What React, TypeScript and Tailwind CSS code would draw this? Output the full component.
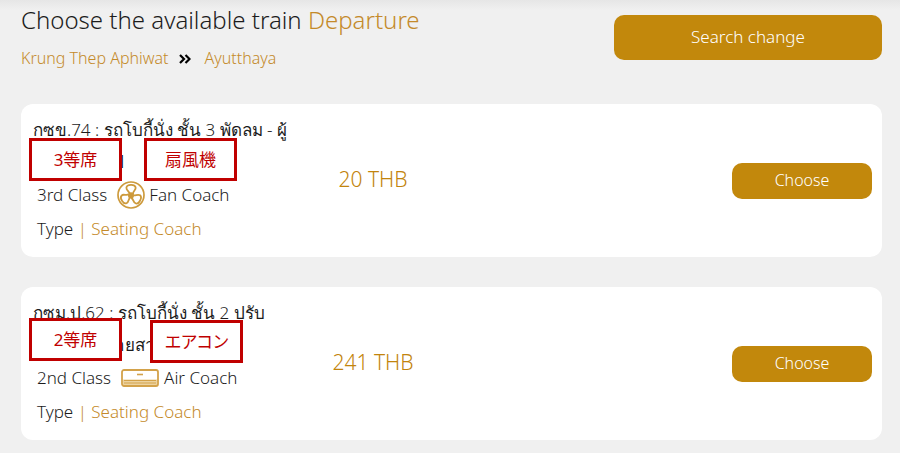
import { ReactNode } from "react";

interface Train {
  name: string;
  detail: string;
  seat: string;
  coach: string;
  icon: ReactNode;
  price: string;
  labels: { text: string; place: string }[];
}

function FanIcon() {
  return (
    <svg viewBox="0 0 28 28" className="ml-2.5 mr-1 h-7 w-7" fill="none" stroke="#cd9a3c" strokeWidth="1.7" strokeLinejoin="round" aria-hidden="true">
      <circle cx="14" cy="14" r="13" />
      <circle cx="14" cy="14.4" r="2.2" fill="#cd9a3c" />
      {["rotate(0 14 14.4)", "rotate(120 14 14.4)", "rotate(240 14 14.4)"].map((turn) => (
        <path key={turn} transform={turn} strokeWidth="1.8" d="M12.6 12.6 C12.6 10.6 9 9.2 9.4 6.6 C10 3.2 17.6 3 18.6 6.2 C19.4 9 15.8 9.8 16 13" />
      ))}
    </svg>
  );
}

function AirIcon() {
  return (
    <svg viewBox="0 0 38 18" className="ml-2.5 mr-[5px] h-[18px] w-[38px]" fill="none" stroke="#d3a24a" aria-hidden="true">
      <path d="M1.5 10.5h35v4a2 2 0 0 1-2 2h-31a2 2 0 0 1-2-2z" fill="#ecd3a0" stroke="none" />
      <rect x="1" y="1" width="36" height="16" rx="2" strokeWidth="1.8" />
      <path d="M3 11.5h32M3 14h32" strokeWidth="1" />
      <path d="M16 5.5h6" strokeWidth="1.6" />
    </svg>
  );
}

const trains: Train[] = [
  {
    name: "กซข.74 : รถโบกี้นั่ง ชั้น 3 พัดลม - ผู้",
    detail: "โดยสารทั่วป",
    seat: "3rd Class",
    coach: "Fan Coach",
    icon: <FanIcon />,
    price: "20 THB",
    labels: [
      { text: "3等席", place: "left-2 top-[34px]" },
      { text: "扇風機", place: "left-[123px] top-[34px]" },
    ],
  },
  {
    name: "กซม.ป.62 : รถโบกี้นั่ง ชั้น 2 ปรับ",
    detail: "อากาศ + ชายสาม",
    seat: "2nd Class",
    coach: "Air Coach",
    icon: <AirIcon />,
    price: "241 THB",
    labels: [
      { text: "2等席", place: "left-2 top-[31px]" },
      { text: "エアコン", place: "left-[129px] top-[33px]" },
    ],
  },
];

function TrainCard({ train }: { train: Train }) {
  return (
    <article className="relative flex items-center rounded-xl bg-white pr-[10px]">
      <div className="w-[280px] shrink-0 pb-[11px] pl-3 pt-[10px] text-[17px] font-light text-[#1c1c1c]">
        <h2 className="whitespace-nowrap leading-8">{train.name}</h2>
        <p className="whitespace-nowrap leading-8">{train.detail}</p>
        <div className="flex h-[34px] items-center whitespace-nowrap pl-1">
          <span>{train.seat}</span>
          {train.icon}
          <span>{train.coach}</span>
        </div>
        <p className="pl-1 leading-[34px]">
          Type <span className="text-[#c48a2a]">| Seating Coach</span>
        </p>
      </div>
      <p className="w-[144px] shrink-0 pb-0.5 text-center text-[21px] font-light text-[#c2840c]">{train.price}</p>
      <button type="button" className="ml-auto h-9 w-[140px] rounded-[10px] bg-[#c2880c] pb-0.5 text-base font-light text-white">
        Choose
      </button>
      {train.labels.map((label) => (
        <span key={label.text} className={`absolute flex h-[43px] w-[93px] items-center justify-center border-3 border-[#c00000] bg-white text-[17px] text-[#c00000] [font-feature-settings:'palt'] ${label.place}`}>
          {label.text}
        </span>
      ))}
    </article>
  );
}

export default function App() {
  return (
    <main className="min-h-screen bg-[#f0f0f0] bg-linear-to-b from-[#e6e6e6] to-[#f0f0f0] to-[10px] pl-[21px] pr-[18px] font-['Noto_Sans','Noto_Sans_CJK_JP',sans-serif]">
      <header className="flex h-[104px] items-start justify-between">
        <div>
          <h1 className="pt-1 text-2xl font-light leading-8 text-[#1c1c1c]">
            Choose the available train <span className="text-[#c48a2a]">Departure</span>
          </h1>
          <div className="flex items-center pt-2 text-base font-light leading-7 text-[#c48a2a]">
            <span>Krung Thep Aphiwat</span>
            <svg viewBox="0 0 12 10" className="ml-2.5 mr-[14px] mt-0.5 h-[10px] w-3" fill="none" stroke="#000" strokeWidth="2.2" aria-hidden="true">
              <path d="M1 1l4 4-4 4M6.5 1l4 4-4 4" />
            </svg>
            <span>Ayutthaya</span>
          </div>
        </div>
        <button type="button" className="mt-[15px] h-[45px] w-[268px] rounded-[10px] bg-[#c2880c] pb-0.5 text-[17px] font-light text-white">
          Search change
        </button>
      </header>
      <div className="flex flex-col gap-[30px] pb-3">
        {trains.map((train) => (
          <TrainCard key={train.name} train={train} />
        ))}
      </div>
    </main>
  );
}
